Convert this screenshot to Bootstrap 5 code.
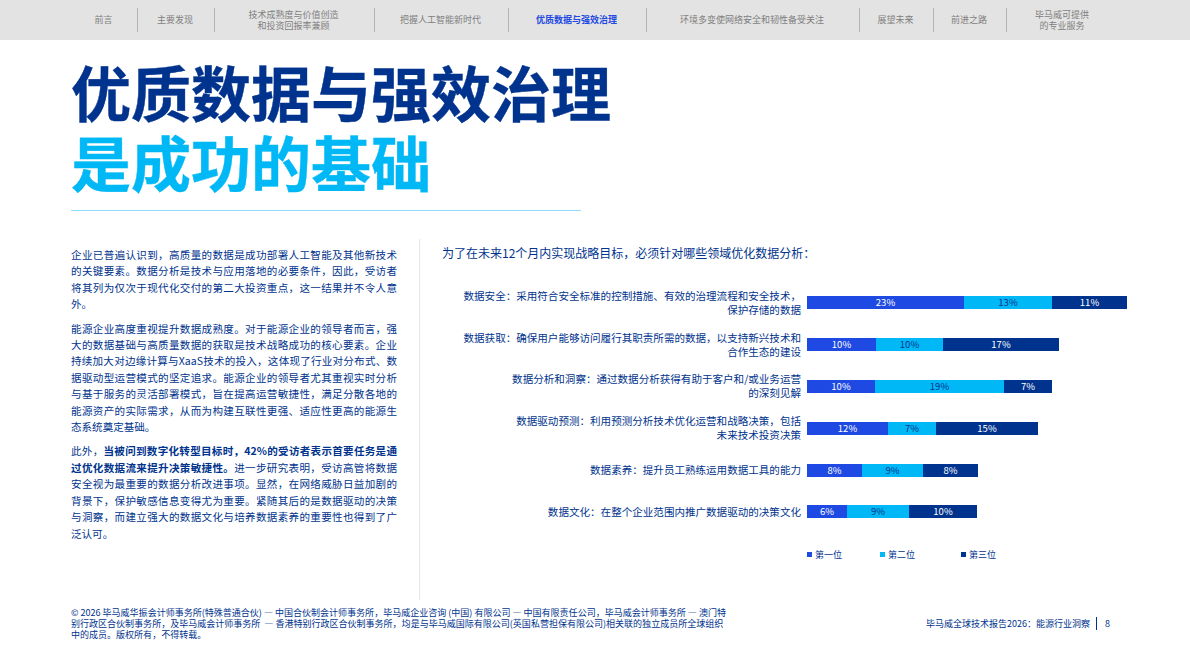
<!DOCTYPE html>
<html lang="zh-CN">
<head>
  <meta charset="UTF-8" />
  <title>优质数据与强效治理</title>
  <link href="https://cdn.jsdelivr.net/npm/bootstrap@5.3.3/dist/css/bootstrap.min.css" rel="stylesheet">
  <style>
    html, body { height: 669px; overflow: hidden; }
    body { font-family: "Noto Sans CJK SC", "Liberation Sans", sans-serif; color: #00338d; background: #fff; }
    .top-nav { height: 40px; background: #e3e3e3; padding-left: 72px; }
    .top-nav a { height: 24px; font-size: 9px; line-height: 10.5px; color: #7f7f7f; text-decoration: none; border-right: 1px solid #b5b5b5; padding: 1px 2px 0 0; }
    .top-nav a:last-child { border-right: 0; }
    .top-nav a.active { color: #1e49e2; font-weight: 700; }
    .w66 { width: 66px; } .w77 { width: 77px; } .w160 { width: 160px; } .w134 { width: 134px; }
    .w138 { width: 138px; } .w213 { width: 213px; } .w74 { width: 74px; } .w73 { width: 73px; } .w112 { width: 112px; }
    .page-head { padding: 16px 0 0 71px; height: 199px; }
    .page-title { font-size: 60px; line-height: 70px; font-weight: 700; margin: 0; color: #00338d; -webkit-text-stroke: .4px currentColor; }
    .page-title span { color: #00b8f5; display: block; }
    .title-rule { width: 510px; height: 1px; background: #8fdcfb; margin-top: 14px; }
    .main-area { height: 361px; padding-left: 71px; }
    .text-col { padding-right: 22px; border-right: 1px solid #e6e6e6; padding-top: 8px; box-sizing: content-box; width: 326px; }
    .text-col p { font-size: 10.55px; line-height: 16.4px; margin: 0 0 8px; text-align: justify; }
    .text-col b { font-weight: 700; }
    .chart-col { padding-left: 22px; width: 710px; }
    .chart-title { font-size: 12px; line-height: 16px; margin: 6px 0 21px; }
    .chart-row { height: 41.8px; }
    .row-label { width: 360px; margin-right: 5px; padding-right: 1px; font-size: 10.55px; line-height: 14px; text-align: right; flex: none; }
    .bar-seg { height: 13px; font-size: 9.5px; line-height: 13px; text-align: center; }
    .seg-a { background: #1e49e2; color: #fff; }
    .seg-b { background: #00b8f5; color: #00338d; }
    .seg-c { background: #00338d; color: #fff; }
    .legend-row { padding-left: 365px; margin-top: 16px; font-size: 9px; line-height: 12px; }
    .legend-item { gap: 3px; width: 73px; }
    .legend-item.wide { width: 81px; }
    .legend-box { width: 5px; height: 5px; flex: none; }
    .page-foot { padding: 7px 0 0 71px; }
    .foot-note { width: 670px; font-size: 9.03px; line-height: 11px; margin: 0; white-space: nowrap; }
    .foot-right { margin-left: 185px; margin-top: 10px; font-size: 9px; line-height: 14px; white-space: nowrap; height: 14px; }
    .foot-right span { border-left: 1px solid #00338d; margin-left: 6px; padding-left: 8px; }
  </style>
</head>
<body>

<!-- Section nav -->
<nav class="top-nav d-flex align-items-center">
  <a href="#" class="w66 d-flex align-items-center justify-content-center text-center">前言</a>
  <a href="#" class="w77 d-flex align-items-center justify-content-center text-center">主要发现</a>
  <a href="#" class="w160 d-flex align-items-center justify-content-center text-center">技术成熟度与价值创造<br>和投资回报率兼顾</a>
  <a href="#" class="w134 d-flex align-items-center justify-content-center text-center">把握人工智能新时代</a>
  <a href="#" class="w138 d-flex align-items-center justify-content-center text-center active">优质数据与强效治理</a>
  <a href="#" class="w213 d-flex align-items-center justify-content-center text-center">环境多变使网络安全和韧性备受关注</a>
  <a href="#" class="w74 d-flex align-items-center justify-content-center text-center">展望未来</a>
  <a href="#" class="w73 d-flex align-items-center justify-content-center text-center">前进之路</a>
  <a href="#" class="w112 d-flex align-items-center justify-content-center text-center">毕马威可提供<br>的专业服务</a>
</nav>

<!-- Title -->
<header class="page-head">
  <h1 class="page-title">优质数据与强效治理<span>是成功的基础</span></h1>
  <div class="title-rule"></div>
</header>

<div class="main-area d-flex">
  <!-- Body copy -->
  <div class="text-col">
    <p>企业已普遍认识到，高质量的数据是成功部署人工智能及其他新技术的关键要素。数据分析是技术与应用落地的必要条件，因此，受访者将其列为仅次于现代化交付的第二大投资重点，这一结果并不令人意外。</p>
    <p>能源企业高度重视提升数据成熟度。对于能源企业的领导者而言，强大的数据基础与高质量数据的获取是技术战略成功的核心要素。企业持续加大对边缘计算与XaaS技术的投入，这体现了行业对分布式、数据驱动型运营模式的坚定追求。能源企业的领导者尤其重视实时分析与基于服务的灵活部署模式，旨在提高运营敏捷性，满足分散各地的能源资产的实际需求，从而为构建互联性更强、适应性更高的能源生态系统奠定基础。</p>
    <p>此外，<b>当被问到数字化转型目标时，42%的受访者表示首要任务是通过优化数据流来提升决策敏捷性。</b>进一步研究表明，受访高管将数据安全视为最重要的数据分析改进事项。显然，在网络威胁日益加剧的背景下，保护敏感信息变得尤为重要。紧随其后的是数据驱动的决策与洞察，而建立强大的数据文化与培养数据素养的重要性也得到了广泛认可。</p>
  </div>

  <!-- Chart -->
  <div class="chart-col">
    <h2 class="chart-title fw-normal">为了在未来12个月内实现战略目标，必须针对哪些领域优化数据分析：</h2>

    <div class="chart-row d-flex align-items-center">
      <div class="row-label">数据安全：采用符合安全标准的控制措施、有效的治理流程和安全技术，<br>保护存储的数据</div>
      <div class="d-flex">
        <div class="bar-seg seg-a" style="width:157px">23%</div>
        <div class="bar-seg seg-b" style="width:88px">13%</div>
        <div class="bar-seg seg-c" style="width:75px">11%</div>
      </div>
    </div>
    <div class="chart-row d-flex align-items-center">
      <div class="row-label">数据获取：确保用户能够访问履行其职责所需的数据，以支持新兴技术和<br>合作生态的建设</div>
      <div class="d-flex">
        <div class="bar-seg seg-a" style="width:69px">10%</div>
        <div class="bar-seg seg-b" style="width:67px">10%</div>
        <div class="bar-seg seg-c" style="width:116px">17%</div>
      </div>
    </div>
    <div class="chart-row d-flex align-items-center">
      <div class="row-label">数据分析和洞察：通过数据分析获得有助于客户和/或业务运营<br>的深刻见解</div>
      <div class="d-flex">
        <div class="bar-seg seg-a" style="width:68px">10%</div>
        <div class="bar-seg seg-b" style="width:129px">19%</div>
        <div class="bar-seg seg-c" style="width:48px">7%</div>
      </div>
    </div>
    <div class="chart-row d-flex align-items-center">
      <div class="row-label">数据驱动预测：利用预测分析技术优化运营和战略决策，包括<br>未来技术投资决策</div>
      <div class="d-flex">
        <div class="bar-seg seg-a" style="width:81px">12%</div>
        <div class="bar-seg seg-b" style="width:48px">7%</div>
        <div class="bar-seg seg-c" style="width:102px">15%</div>
      </div>
    </div>
    <div class="chart-row d-flex align-items-center">
      <div class="row-label">数据素养：提升员工熟练运用数据工具的能力</div>
      <div class="d-flex">
        <div class="bar-seg seg-a" style="width:55px">8%</div>
        <div class="bar-seg seg-b" style="width:61px">9%</div>
        <div class="bar-seg seg-c" style="width:55px">8%</div>
      </div>
    </div>
    <div class="chart-row d-flex align-items-center">
      <div class="row-label">数据文化：在整个企业范围内推广数据驱动的决策文化</div>
      <div class="d-flex">
        <div class="bar-seg seg-a" style="width:40px">6%</div>
        <div class="bar-seg seg-b" style="width:62px">9%</div>
        <div class="bar-seg seg-c" style="width:68px">10%</div>
      </div>
    </div>

    <div class="legend-row d-flex">
      <div class="legend-item d-flex align-items-center"><i class="legend-box seg-a"></i>第一位</div>
      <div class="legend-item wide d-flex align-items-center"><i class="legend-box seg-b"></i>第二位</div>
      <div class="legend-item d-flex align-items-center"><i class="legend-box seg-c"></i>第三位</div>
    </div>
  </div>
</div>

<!-- Footer -->
<footer class="page-foot d-flex">
  <p class="foot-note">© 2026 毕马威华振会计师事务所(特殊普通合伙) — 中国合伙制会计师事务所，毕马威企业咨询 (中国) 有限公司 — 中国有限责任公司，毕马威会计师事务所 — 澳门特<br>别行政区合伙制事务所，及毕马威会计师事务所 &nbsp;— 香港特别行政区合伙制事务所，均是与毕马威国际有限公司(英国私营担保有限公司)相关联的独立成员所全球组织<br>中的成员。版权所有，不得转载。</p>
  <div class="foot-right">毕马威全球技术报告2026：能源行业洞察<span>8</span></div>
</footer>

<script src="https://cdn.jsdelivr.net/npm/bootstrap@5.3.3/dist/js/bootstrap.bundle.min.js"></script>
</body>
</html>
